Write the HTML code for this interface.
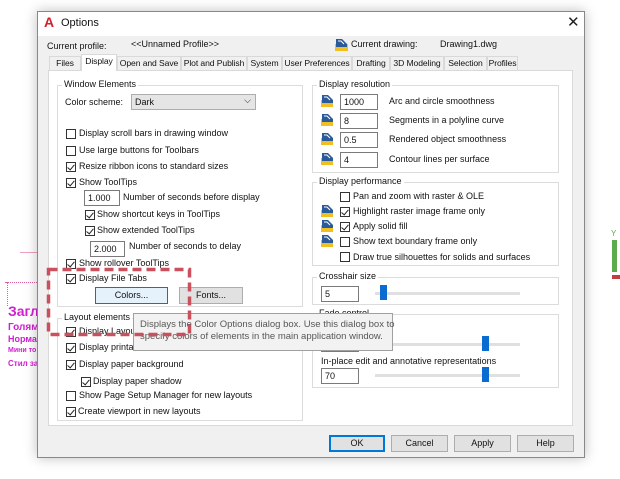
<!DOCTYPE html>
<html><head><meta charset="utf-8"><style>
*{box-sizing:border-box;margin:0;padding:0}
body{width:620px;height:479px;overflow:hidden;background:#fff;font-family:"Liberation Sans","DejaVu Sans",sans-serif;font-size:9px;color:#111;position:relative}
.a{position:absolute;white-space:nowrap}
.dlg{position:absolute;left:37px;top:11px;width:548px;height:447px;background:#f0f0f0;border:1px solid #888;box-shadow:0 0 12px rgba(0,0,0,.25)}
.cb{position:absolute;width:10px;height:10px;border:1px solid #333;background:#fff}
.cb.c::after{content:"";position:absolute;left:2px;top:0px;width:3px;height:6px;border-right:1.3px solid #222;border-bottom:1.3px solid #222;transform:rotate(40deg)}
.inp{position:absolute;border:1px solid #7a7a7a;background:#fff;height:16px;padding:2px 3px;font-size:9px}
.grp{position:absolute;border:1px solid #dcdcdc}
.gl{position:absolute;background:#fff;padding:0 2px}
.btn{position:absolute;border:1px solid #adadad;background:#e1e1e1;text-align:center;line-height:15px;height:17px}
.tab{position:absolute;top:56px;height:14px;border:1px solid #d9d9d9;border-bottom:none;background:#f0f0f0;text-align:center;line-height:13px;white-space:nowrap;overflow:hidden;font-size:8.6px;letter-spacing:-0.1px}
.ic{position:absolute;width:12px;height:12px}
.trk{position:absolute;height:3px;background:#e0e0e0}
.th{position:absolute;width:7px;height:15px;background:#0a6cd1}
</style></head><body>
<div class="a" style="left:5px;top:282px;width:32px;border-top:1px dotted #e060a0"></div>
<div class="a" style="left:7px;top:282px;height:24px;border-left:1px dotted #e060a0"></div>
<div class="a" style="left:20px;top:252px;width:17px;border-top:1px solid #f0a0c0"></div>
<div class="a" style="left:8px;top:303px;color:#d020d0;font-weight:bold;font-size:14px">Загл</div>
<div class="a" style="left:8px;top:322px;color:#d020d0;font-weight:bold;font-size:10px">Голям</div>
<div class="a" style="left:8px;top:334px;color:#d020d0;font-weight:bold;font-size:9px">Норма</div>
<div class="a" style="left:8px;top:347px;color:#d020d0;font-weight:bold;font-size:7px">Мини то</div>
<div class="a" style="left:8px;top:359px;color:#d020d0;font-weight:bold;font-size:8px">Стил за</div>
<div class="a" style="left:612px;top:240px;width:5px;height:32px;background:#5cab4c"></div>
<div class="a" style="left:611px;top:229px;color:#5cab4c;font-size:8px">Y</div>
<div class="a" style="left:612px;top:275px;width:8px;height:4px;background:#c04040"></div>

<div class="dlg"></div>
<div class="a" style="left:38px;top:12px;width:546px;height:24px;background:#fff"></div>
<div class="a" style="left:44px;top:14px;color:#d0202a;font-weight:bold;font-size:14px">A</div>
<div class="a" style="left:61px;top:17px;font-size:11px">Options</div>
<div class="a" style="left:567px;top:13px;font-size:15px;color:#222">✕</div>
<div class="a" style="left:47px;top:41px">Current profile:</div>
<div class="a" style="left:131px;top:39px">&lt;&lt;Unnamed Profile&gt;&gt;</div>
<svg class="a" style="left:335px;top:38px" width="13" height="13"><rect x="0" y="6" width="13" height="7" fill="#f0c020"/><path d="M1 1h6l5 5v3H1z" fill="#2a5a9a"/><path d="M3 3h3l3 3" stroke="#fff" fill="none"/></svg>
<div class="a" style="left:351px;top:39px">Current drawing:</div>
<div class="a" style="left:440px;top:39px">Drawing1.dwg</div>

<div class="a" style="left:48px;top:70px;width:525px;height:356px;background:#fff;border:1px solid #d9d9d9"></div>
<div class="tab" style="left:49px;width:32px">Files</div>
<div class="tab" style="left:81px;width:36px;top:54px;height:17px;background:#fff;z-index:2">Display</div>
<div class="tab" style="left:117px;width:64px">Open and Save</div>
<div class="tab" style="left:181px;width:66px">Plot and Publish</div>
<div class="tab" style="left:247px;width:35px">System</div>
<div class="tab" style="left:282px;width:70px">User Preferences</div>
<div class="tab" style="left:352px;width:38px">Drafting</div>
<div class="tab" style="left:390px;width:54px">3D Modeling</div>
<div class="tab" style="left:444px;width:43px">Selection</div>
<div class="tab" style="left:487px;width:31px">Profiles</div>

<div class="grp" style="left:57px;top:85px;width:246px;height:222px"></div>
<div class="gl" style="left:62px;top:79px">Window Elements</div>
<div class="a" style="left:65px;top:97px">Color scheme:</div>
<div class="a" style="left:131px;top:94px;width:125px;height:16px;background:#e5e5e5;border:1px solid #adadad;padding:2px 3px">Dark<span style="position:absolute;right:4px;top:0px;font-size:9px">⌵</span></div>
<div class="cb" style="left:66px;top:129px"></div><div class="a" style="left:79px;top:128px">Display scroll bars in drawing window</div>
<div class="cb" style="left:66px;top:146px"></div><div class="a" style="left:79px;top:145px">Use large buttons for Toolbars</div>
<div class="cb c" style="left:66px;top:162px"></div><div class="a" style="left:79px;top:161px">Resize ribbon icons to standard sizes</div>
<div class="cb c" style="left:66px;top:178px"></div><div class="a" style="left:79px;top:177px">Show ToolTips</div>
<div class="inp" style="left:84px;top:190px;width:36px">1.000</div><div class="a" style="left:123px;top:192px">Number of seconds before display</div>
<div class="cb c" style="left:85px;top:210px"></div><div class="a" style="left:97px;top:209px">Show shortcut keys in ToolTips</div>
<div class="cb c" style="left:85px;top:226px"></div><div class="a" style="left:97px;top:225px">Show extended ToolTips</div>
<div class="inp" style="left:90px;top:241px;width:35px">2.000</div><div class="a" style="left:129px;top:241px">Number of seconds to delay</div>
<div class="cb c" style="left:66px;top:259px"></div><div class="a" style="left:79px;top:258px">Show rollover ToolTips</div>
<div class="cb c" style="left:66px;top:274px"></div><div class="a" style="left:79px;top:273px">Display File Tabs</div>
<div class="btn" style="left:95px;top:287px;width:73px;background:#e5f1fb;border-color:#0078d7">Colors...</div>
<div class="btn" style="left:179px;top:287px;width:64px">Fonts...</div>

<div class="grp" style="left:57px;top:318px;width:246px;height:103px"></div>
<div class="gl" style="left:62px;top:312px">Layout elements</div>
<div class="cb c" style="left:66px;top:327px"></div><div class="a" style="left:79px;top:326px">Display Layout and Model tabs</div>
<div class="cb c" style="left:66px;top:343px"></div><div class="a" style="left:79px;top:342px">Display printable area</div>
<div class="cb c" style="left:66px;top:360px"></div><div class="a" style="left:79px;top:359px">Display paper background</div>
<div class="cb c" style="left:81px;top:377px"></div><div class="a" style="left:93px;top:376px">Display paper shadow</div>
<div class="cb" style="left:66px;top:391px"></div><div class="a" style="left:79px;top:390px">Show Page Setup Manager for new layouts</div>
<div class="cb c" style="left:66px;top:407px"></div><div class="a" style="left:78px;top:406px">Create viewport in new layouts</div>

<div class="grp" style="left:312px;top:85px;width:247px;height:88px"></div>
<div class="gl" style="left:317px;top:79px">Display resolution</div>
<svg width="0" height="0" style="position:absolute"><defs><g id="ico"><rect x="0" y="5" width="12" height="7" fill="#f0c020"/><path d="M1 0h6l5 5v3H1z" fill="#2a5a9a"/><path d="M3 2h3l3 3" stroke="#fff" fill="none"/></g></defs></svg>
<svg class="ic" style="left:321px;top:95px"><use href="#ico"/></svg>
<svg class="ic" style="left:321px;top:114px"><use href="#ico"/></svg>
<svg class="ic" style="left:321px;top:133px"><use href="#ico"/></svg>
<svg class="ic" style="left:321px;top:153px"><use href="#ico"/></svg>
<div class="inp" style="left:340px;top:94px;width:38px">1000</div><div class="a" style="left:389px;top:96px">Arc and circle smoothness</div>
<div class="inp" style="left:340px;top:113px;width:38px">8</div><div class="a" style="left:389px;top:115px">Segments in a polyline curve</div>
<div class="inp" style="left:340px;top:132px;width:38px">0.5</div><div class="a" style="left:389px;top:134px">Rendered object smoothness</div>
<div class="inp" style="left:340px;top:152px;width:38px">4</div><div class="a" style="left:389px;top:154px">Contour lines per surface</div>

<div class="grp" style="left:312px;top:182px;width:247px;height:84px"></div>
<div class="gl" style="left:317px;top:176px">Display performance</div>
<div class="cb" style="left:340px;top:192px"></div><div class="a" style="left:353px;top:191px">Pan and zoom with raster &amp; OLE</div>
<svg class="ic" style="left:321px;top:205px"><use href="#ico"/></svg>
<div class="cb c" style="left:340px;top:207px"></div><div class="a" style="left:353px;top:206px">Highlight raster image frame only</div>
<svg class="ic" style="left:321px;top:220px"><use href="#ico"/></svg>
<div class="cb c" style="left:340px;top:222px"></div><div class="a" style="left:353px;top:221px">Apply solid fill</div>
<svg class="ic" style="left:321px;top:235px"><use href="#ico"/></svg>
<div class="cb" style="left:340px;top:237px"></div><div class="a" style="left:353px;top:236px">Show text boundary frame only</div>
<div class="cb" style="left:340px;top:252px"></div><div class="a" style="left:353px;top:252px">Draw true silhouettes for solids and surfaces</div>

<div class="grp" style="left:312px;top:277px;width:247px;height:28px"></div>
<div class="gl" style="left:317px;top:271px">Crosshair size</div>
<div class="inp" style="left:321px;top:286px;width:38px">5</div>
<div class="trk" style="left:375px;top:292px;width:145px"></div>
<div class="th" style="left:380px;top:285px"></div>

<div class="grp" style="left:312px;top:314px;width:247px;height:74px"></div>
<div class="gl" style="left:317px;top:308px">Fade control</div>
<div class="inp" style="left:321px;top:336px;width:38px">50</div>
<div class="trk" style="left:375px;top:343px;width:145px"></div>
<div class="th" style="left:482px;top:336px"></div>
<div class="a" style="left:321px;top:356px">In-place edit and annotative representations</div>
<div class="inp" style="left:321px;top:368px;width:38px">70</div>
<div class="trk" style="left:375px;top:374px;width:145px"></div>
<div class="th" style="left:482px;top:367px"></div>

<div class="a" style="left:133px;top:313px;width:260px;height:38px;background:#f2f2f2;border:1px solid #a0a0a0;color:#575757;font-size:9.5px;line-height:12px;padding:5px 6px">Displays the Color Options dialog box. Use this dialog box to<br>specify colors of elements in the main application window.</div>

<svg class="a" style="left:46px;top:267px" width="147" height="71"><rect x="2.5" y="2.5" width="141" height="65" fill="none" stroke="#c9505c" stroke-width="3.5" stroke-dasharray="9 5"/></svg>

<div class="btn" style="left:329px;top:435px;width:56px;border:1px solid #0078d7;box-shadow:inset 0 0 0 1px #0078d7">OK</div>
<div class="btn" style="left:391px;top:435px;width:57px">Cancel</div>
<div class="btn" style="left:454px;top:435px;width:57px">Apply</div>
<div class="btn" style="left:517px;top:435px;width:57px">Help</div>
</body></html>
